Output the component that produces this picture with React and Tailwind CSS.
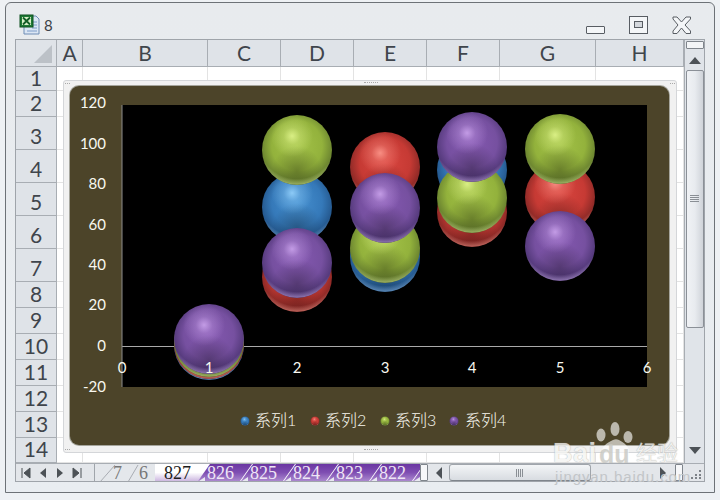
const cols = ["A", "B", "C", "D", "E", "F", "G", "H"];
const rows = Array.from({ length: 14 }, (_, i) => i + 1);
const palette = {
  blue: { light: "#4690d0", base: "#3579b9", dark: "#25598f", edge: "#173a5e", hi: "#9ad6ff", rim: "#6f9fd0" },
  red: { light: "#d9453f", base: "#c63a34", dark: "#8f2a27", edge: "#5e1a18", hi: "#ff9c90", rim: "#d97a70" },
  green: { light: "#a3c248", base: "#93b23c", dark: "#6c8530", edge: "#46561d", hi: "#e4f890", rim: "#b5cc78" },
  purple: { light: "#8458b0", base: "#7650a0", dark: "#553a7c", edge: "#372552", hi: "#cfa8f0", rim: "#a88ccc" },
};
const bubbles = [
  ["blue", 209, 345], ["red", 209, 344], ["green", 209, 342], ["purple", 209, 339],
  ["blue", 297, 207], ["red", 297, 277], ["green", 297, 150], ["purple", 297, 263],
  ["blue", 385, 257], ["red", 385, 167], ["green", 385, 248], ["purple", 385, 208],
  ["blue", 472, 170], ["red", 472, 212], ["green", 472, 198], ["purple", 472, 147],
  ["red", 560, 197], ["green", 560, 149], ["purple", 560, 246],
];
const yLabels = [["120", 103], ["100", 144], ["80", 184], ["60", 225], ["40", 265], ["20", 305], ["0", 346], ["-20", 387]];
const xLabels = [["0", 122], ["1", 209], ["2", 297], ["3", 385], ["4", 472], ["5", 560], ["6", 647]];
const legend = [["blue", 245, "系列1", 255], ["red", 315, "系列2", 325], ["green", 385, "系列3", 395], ["purple", 454, "系列4", 465]];

function Sphere({ c, x, y, r = 35 }) {
  return (
    <g>
      <circle cx={x} cy={y} r={r} fill={`url(#b-${c})`} />
      <circle cx={x} cy={y} r={r} fill="url(#shade)" />
      <circle cx={x} cy={y} r={r} fill={`url(#h-${c})`} />
      <circle cx={x} cy={y} r={r} fill={`url(#r-${c})`} />
    </g>
  );
}

function Chart() {
  return (
    <svg viewBox="70 86 599 359" className="block w-full h-full">
      <defs>
        <radialGradient id="shade" cx="0.5" cy="0.8" r="0.36">
          <stop offset="0" stopColor="#000" stopOpacity="0.28" />
          <stop offset="1" stopColor="#000" stopOpacity="0" />
        </radialGradient>
        {Object.entries(palette).map(([k, p]) => (
          <g key={k}>
            <radialGradient id={`b-${k}`} cx="0.5" cy="0.44" r="0.58">
              <stop offset="0" stopColor={p.light} />
              <stop offset="0.62" stopColor={p.base} />
              <stop offset="0.88" stopColor={p.dark} />
              <stop offset="1" stopColor={p.edge} />
            </radialGradient>
            <radialGradient id={`h-${k}`} cx="0.43" cy="0.3" r="0.3">
              <stop offset="0" stopColor={p.hi} stopOpacity="0.85" />
              <stop offset="0.4" stopColor={p.hi} stopOpacity="0.32" />
              <stop offset="1" stopColor={p.hi} stopOpacity="0" />
            </radialGradient>
            <radialGradient id={`r-${k}`} cx="0.5" cy="0.36" r="0.64">
              <stop offset="0.86" stopColor={p.rim} stopOpacity="0" />
              <stop offset="0.98" stopColor={p.rim} stopOpacity="0.7" />
              <stop offset="1" stopColor={p.rim} stopOpacity="0.4" />
            </radialGradient>
          </g>
        ))}
      </defs>
      <rect x="122" y="105" width="525" height="282" fill="#000" />
      <line x1="122" y1="346.5" x2="647" y2="346.5" stroke="#a9a9a9" strokeWidth="1" />
      <line x1="122" y1="105" x2="122" y2="387" stroke="#8c8c8c" strokeWidth="1" />
      {bubbles.map(([c, x, y], i) => <Sphere key={i} c={c} x={x} y={y} />)}
      <g fill="#f8f8f0" style={{ fontFamily: "Lato, 'Liberation Sans', sans-serif", fontSize: 15 }}>
        {yLabels.map(([t, y]) => <text key={t} x="106" y={y + 5} textAnchor="end">{t}</text>)}
        {xLabels.map(([t, x]) => <text key={t} x={x} y="373" textAnchor="middle">{t}</text>)}
      </g>
      {legend.map(([c, mx, t, tx]) => (
        <g key={t}>
          <Sphere c={c} x={mx} y={421} r={4.5} />
          <text x={tx} y="426" fill="#f8f8f0" style={{ fontFamily: "Lato, 'Noto Sans CJK SC', sans-serif", fontSize: 16, fontWeight: 300 }}>{t}</text>
        </g>
      ))}
    </svg>
  );
}

function Dots({ className }) {
  return <span className={`absolute block border-t border-dotted border-[#a8a8a8] ${className}`} />;
}

function PurpleTab({ label, first }) {
  return (
    <div className={`relative shrink-0 w-[54px] h-full ${first ? "-ml-[13px]" : "-ml-[11px]"} bg-gradient-to-b from-[#6a36a2] via-[#7f4eb2] to-[#ab88ce] [clip-path:polygon(12px_0,100%_0,42px_100%,0_100%)] flex items-center justify-center pr-[9px] text-[#efe6f6] text-[18px] leading-none font-['Liberation_Serif',serif]`}>
      {label}
      <span className="absolute left-[1px] bottom-0 w-[6px] h-[4px] bg-[#e8e8f0] [clip-path:polygon(100%_0,100%_100%,0_100%)]" />
    </div>
  );
}

function GrayTab({ label, className, x2 }) {
  return (
    <div className={`relative shrink-0 h-full flex items-center justify-end text-[#777] text-[18px] leading-none font-['Liberation_Serif',serif] ${className}`}>
      <svg className="absolute left-0 top-0" width="22" height="18"><line x1="5" y1="18" x2={x2} y2="1" stroke="#a8acb2" /></svg>
      {label}
    </div>
  );
}

function Tri({ d, className = "" }) {
  return <svg width="10" height="12" viewBox="0 0 10 12" className={className}><path d={d} fill="#4d5257" /></svg>;
}

export default function App() {
  return (
    <div className="w-[720px] h-[500px] overflow-hidden bg-[#eef1f4] pl-[5px] pt-[2px] relative font-['Lato','Liberation_Sans',sans-serif]">
      <div className="w-[710px] h-[491px] border border-[#6d7277] rounded-t-[6px] bg-gradient-to-b from-[#e8ebee] to-[#e9edf1]">
        {/* title bar */}
        <div className="h-[36px] flex items-start pl-[13px]">
          <svg width="21" height="21" viewBox="0 0 21 21" className="mt-[11px]">
            <path d="M5 2 H17 L20 5 V20 H5 Z" fill="#dbe6f4" stroke="#6f8db5" />
            <path d="M13 8h5M13 11h5M13 14h5M8 17h10" stroke="#7d9cc8" strokeWidth="1" />
            <rect x="1" y="1" width="13" height="12" fill="#1f7a35" stroke="#0f5020" />
            <rect x="3" y="3" width="9" height="8" fill="#d8efc8" />
            <path d="M4 3.5l7 7M11 3.5l-7 7" stroke="#125c26" strokeWidth="1.8" />
          </svg>
          <span className="ml-[4px] mt-[13px] text-[15px] leading-[18px] text-[#3c4147]">8</span>
          <div className="ml-auto relative w-[128px] h-full">
            <span className="absolute left-0 top-[23px] w-[19px] h-[8px] border border-[#585d63] bg-[#f4f6f8] rounded-[1px]" />
            <span className="absolute left-[43px] top-[13px] w-[19px] h-[18px] border border-[#585d63] bg-[#f4f6f8]">
              <span className="block mx-auto mt-[4px] w-[9px] h-[7px] border border-[#585d63] bg-[#d4d8dd]" />
            </span>
            <svg className="absolute left-[85px] top-[12px]" width="21" height="20" viewBox="0 0 21 20">
              <path d="M2 2H6L10.5 7L15 2H19.5V4L14 10L19.5 16V18.5H15L10.5 13L6 18.5H2V16L7 10L2 4Z" fill="#f4f6f8" stroke="#585d63" />
            </svg>
          </div>
        </div>
        {/* workbook frame */}
        <div className="ml-[9px] w-[690px] h-[443px] border border-[#9fa4aa] flex flex-col bg-white">
          <div className="flex h-[423px]">
            {/* sheet */}
            <div className="relative w-[668px] h-full grid grid-cols-[41px_26px_125px_73px_73px_73px_73px_96px_88px] grid-rows-[27px_24px_26px_33px_33px_33px_33px_33px_26px_26px_26px_26px_26px_26px_25px] text-[#3f454c] text-[21px]">
              <div className="relative bg-[#dfe3e8] border-r border-b border-[#a8adb3]">
                <span className="absolute right-[4px] bottom-[3px] w-[18px] h-[18px] bg-[#bcc1c7] [clip-path:polygon(100%_0,100%_100%,0_100%)]" />
              </div>
              {cols.map((c) => (
                <div key={c} className="bg-[#dfe3e8] border-r border-b border-[#a8adb3] flex items-center justify-center leading-none pb-[2px]">{c}</div>
              ))}
              {rows.map((r) => (
                <div key={r} className="contents">
                  <div className={`bg-[#dfe3e8] border-r border-b border-[#a8adb3] flex items-center justify-center leading-none ${r >= 3 && r <= 7 ? "pt-[4px]" : "pb-[3px]"}`}>{r}</div>
                  {cols.map((c) => <div key={c} className="border-r border-b border-[#e3e3e3]" />)}
                </div>
              ))}
              {/* chart object */}
              <div className="absolute left-[47px] top-[40px] w-[614px] h-[373px] pl-[6px] pr-[7px] pt-[5px] pb-[7px] bg-[#f1f1f1] border border-[#d4d6d9] rounded-[3px]">
                <Dots className="left-[300px] top-[1px] w-[14px]" />
                <Dots className="left-[300px] bottom-[2px] w-[14px]" />
                <Dots className="left-[1px] top-[2px] w-[5px]" />
                <Dots className="right-[1px] top-[2px] w-[5px]" />
                <Dots className="left-[1px] bottom-[2px] w-[5px]" />
                <div className="w-full h-full rounded-[9px] overflow-hidden bg-[#4c4429] shadow-[0_0_0_1px_#a5a59c]">
                  <Chart />
                </div>
              </div>
            </div>
            {/* vertical scrollbar */}
            <div className="w-[20px] h-full bg-[#e0e4e9] border-l border-[#a8adb3] flex flex-col items-center">
              <span className="block w-[18px] h-[8px] mt-[1px] border border-[#7f858c] bg-[#f3f5f7] rounded-[1px]" />
              <svg width="12" height="7" viewBox="0 0 12 7" className="mt-[8px]"><path d="M0 7L6 0L12 7Z" fill="#4d5257" /></svg>
              <div className="mt-[6px] w-[18px] h-[258px] border border-[#8b9097] rounded-[2px] bg-gradient-to-r from-[#f0f2f5] via-[#e8ebef] to-[#cfd3d9] flex items-center justify-center">
                <svg width="9" height="8" viewBox="0 0 9 8"><path d="M0 .5h9M0 2.5h9M0 4.5h9M0 6.5h9" stroke="#8a8f95" /></svg>
              </div>
              <svg width="12" height="7" viewBox="0 0 12 7" className="mt-[119px]"><path d="M0 0L6 7L12 0Z" fill="#4d5257" /></svg>
            </div>
          </div>
          {/* sheet tabs row */}
          <div className="flex h-[18px] bg-[#e3e6ea] border-t border-[#a8adb3]">
            <div className="w-[79px] border-r border-[#a0a5ab] flex items-center pl-[5px] gap-[7px]">
              <Tri d="M1 1V11M9 1L3 6L9 11Z" className="stroke-[#4d5257]" />
              <Tri d="M8 1L2 6L8 11Z" />
              <Tri d="M2 1L8 6L2 11Z" />
              <Tri d="M9 1V11M1 1L7 6L1 11Z" className="stroke-[#4d5257]" />
            </div>
            <div className="w-[325px] flex overflow-hidden bg-white">
              <div className="flex bg-[#e4e7eb]">
                <GrayTab label="7" className="w-[28px] pr-[1px]" x2={20} />
                <GrayTab label="6" className="w-[32px] pr-[7px]" x2={15} />
              </div>
              <div className="shrink-0 w-[56px] h-full bg-gradient-to-b from-white via-white to-[#cdb8e0] [clip-path:polygon(0_0,100%_0,43px_100%,0_100%)] pl-[9px] flex items-center text-[18px] leading-none text-[#1c1c1c] font-['Liberation_Serif',serif]">827</div>
              <PurpleTab label="826" first />
              <PurpleTab label="825" />
              <PurpleTab label="824" />
              <PurpleTab label="823" />
              <PurpleTab label="822" />
              <PurpleTab label="" />
            </div>
            <span className="w-[8px] h-full border border-[#7f858c] bg-[#f6f7f9] rounded-[1px]" />
            <div className="w-[247px] flex items-center">
              <svg width="7" height="12" viewBox="0 0 7 12" className="ml-[8px]"><path d="M6 0L0 6L6 12Z" fill="#4d5257" /></svg>
              <div className="ml-[6px] w-[142px] h-full border border-[#a0a5ab] border-b-[#7f858c] rounded-[3px] bg-gradient-to-b from-[#f3f5f7] to-[#d8dce1] flex items-center justify-center">
                <svg width="8" height="8" viewBox="0 0 8 8"><path d="M.5 0v8M2.5 0v8M4.5 0v8M6.5 0v8" stroke="#8a8f95" /></svg>
              </div>
              <svg width="7" height="12" viewBox="0 0 7 12" className="ml-[68px]"><path d="M1 0L7 6L1 12Z" fill="#4d5257" /></svg>
            </div>
            <span className="w-[8px] h-full border border-[#7f858c] bg-[#f6f7f9] rounded-[1px]" />
            <div className="flex-1 flex items-end justify-end pr-[3px] pb-[2px]">
              <svg width="10" height="10" viewBox="0 0 10 10"><path d="M8 1h2v2H8zM4 5h2v2H4zM8 5h2v2H8zM0 8h2v2H0zM4 8h2v2H4zM8 8h2v2H8z" fill="#7d8288" /></svg>
            </div>
          </div>
        </div>
      </div>
      {/* Baidu watermark */}
      <div className="absolute left-[553px] top-[420px] w-[135px] h-[66px] text-white">
        <svg className="absolute left-[40px] top-[2px]" width="46" height="40" viewBox="0 0 46 40" fill="#fff" fillOpacity="0.62">
          <ellipse cx="8" cy="13" rx="4.5" ry="6.5" />
          <ellipse cx="22" cy="7" rx="4.5" ry="7" />
          <ellipse cx="35" cy="15" rx="4.5" ry="6" />
          <path d="M20 18c-7 3-11 7-11 11c0 4 3 5 7 4c4-1 8-1 12 0c4 1 8 0 8-4c0-4-4-8-10-11c-2-1-4-1-6 0Z" />
        </svg>
        <span className="absolute left-0 top-[19px] text-[27px] leading-[28px] tracking-[0.5px] font-bold font-['Liberation_Sans',sans-serif] text-[#f4f4f2] opacity-80 [text-shadow:0_0_1px_#8f8f8f]">Bai</span>
        <span className="absolute left-[46px] top-[22px] text-[25px] leading-[24px] font-bold font-['Liberation_Sans',sans-serif] text-[#c8c8c2] opacity-80">du</span>
        <span className="absolute left-[83px] top-[18px] text-[21px] leading-[26px] font-['Noto_Sans_CJK_SC',sans-serif] text-[#f0f0ee] opacity-80 [text-shadow:0_0_1px_#8f8f8f]">经验</span>
        <span className="absolute left-[2px] top-[48px] text-[15px] leading-[18px] tracking-[0.9px] font-['Liberation_Sans',sans-serif] text-[#c2c5c8]">jingyan.baidu.com</span>
      </div>
    </div>
  );
}
